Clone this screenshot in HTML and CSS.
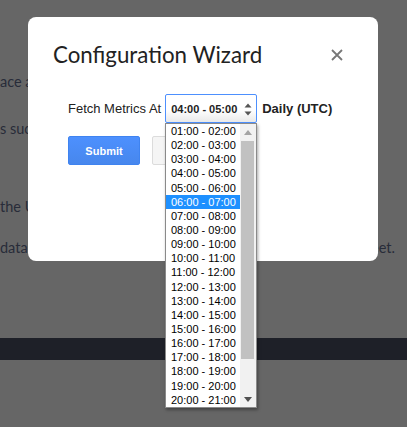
FILE: index.html
```html
<!DOCTYPE html>
<html>
<head>
<meta charset="utf-8">
<link rel="stylesheet" href="styles.css">
</head>
<body>
<div class="page">
  <p class="line l1">ace an</p>
  <p class="line l2">s succ</p>
  <p class="line l3">the Up</p>
  <p class="line l4 split"><span>data</span><span>sheet.</span></p>
  <div class="bar"></div>
</div>

<div class="dialog">
  <div class="head">
    <h1 class="title">Configuration Wizard</h1>
    <button class="close" aria-label="Close">
      <svg width="12" height="12" viewBox="0 0 12 12"><path d="M1 1L11 11M11 1L1 11" stroke="#777" stroke-width="1.8" fill="none"/></svg>
    </button>
  </div>
  <div class="row">
    <span class="label">Fetch Metrics At</span>
    <div class="select">
      <span>04:00 - 05:00</span>
      <svg width="8" height="13" viewBox="0 0 8 13"><path d="M4 0.5L7.5 4.5H0.5Z M4 12.5L7.5 8.5H0.5Z" fill="#555"/></svg>
    </div>
    <span class="suffix">Daily (UTC)</span>
  </div>
  <div class="buttons">
    <button class="btn primary">Submit</button>
    <button class="btn"></button>
  </div>

  <div class="listbox">
    <div class="options">
      <div class="opt">01:00 - 02:00</div>
      <div class="opt">02:00 - 03:00</div>
      <div class="opt">03:00 - 04:00</div>
      <div class="opt">04:00 - 05:00</div>
      <div class="opt">05:00 - 06:00</div>
      <div class="opt sel">06:00 - 07:00</div>
      <div class="opt">07:00 - 08:00</div>
      <div class="opt">08:00 - 09:00</div>
      <div class="opt">09:00 - 10:00</div>
      <div class="opt">10:00 - 11:00</div>
      <div class="opt">11:00 - 12:00</div>
      <div class="opt">12:00 - 13:00</div>
      <div class="opt">13:00 - 14:00</div>
      <div class="opt">14:00 - 15:00</div>
      <div class="opt">15:00 - 16:00</div>
      <div class="opt">16:00 - 17:00</div>
      <div class="opt">17:00 - 18:00</div>
      <div class="opt">18:00 - 19:00</div>
      <div class="opt">19:00 - 20:00</div>
      <div class="opt">20:00 - 21:00</div>
    </div>
    <div class="scrollbar">
      <div class="sb-btn"><svg width="8" height="5" viewBox="0 0 8 5"><path d="M4 0L8 5H0Z" fill="#a3a3a3"/></svg></div>
      <div class="track"><div class="thumb"></div></div>
      <div class="sb-btn"><svg width="8" height="5" viewBox="0 0 8 5"><path d="M4 5L8 0H0Z" fill="#505050"/></svg></div>
    </div>
  </div>
</div>
</body>
</html>
```
FILE: styles.css
```css
html, body {
  margin: 0;
  padding: 0;
}
body {
  width: 407px;
  height: 427px;
  overflow: hidden;
  position: relative;
  background: #666666;
  font-family: Lato, "Open Sans", sans-serif;
}
.page {
  padding-top: 72px;
  color: #282c39;
}
.line {
  margin: 0;
  font-size: 14.5px;
  line-height: 20px;
  white-space: nowrap;
  padding-left: 0;
}
.l2 { margin-top: 27px; }
.l3 { margin-top: 58px; }
.l4 { margin-top: 21px; }
.split {
  display: flex;
  justify-content: space-between;
  padding-right: 12px;
}
.bar {
  margin-top: 80px;
  height: 22px;
  background: #1e2028;
}

.dialog {
  position: absolute;
  left: 28px;
  top: 17px;
  width: 350px;
  height: 244px;
  background: #fff;
  border-radius: 8px;
}
.head {
  display: flex;
  justify-content: space-between;
  align-items: center;
  padding: 24px 35px 0 25px;
}
.title {
  margin: 0;
  font-size: 22.3px;
  line-height: 28px;
  font-weight: 400;
  color: #222;
}
.close {
  border: 0;
  background: none;
  padding: 0;
  width: 12px;
  height: 12px;
  display: flex;
}
.row {
  display: flex;
  align-items: center;
  margin-top: 25px;
  padding-left: 40px;
  font-family: "Liberation Sans", Arial, sans-serif;
  font-size: 13px;
  color: #222;
}
.label { margin-right: 4px; }
.select {
  box-sizing: border-box;
  width: 92px;
  height: 29px;
  border: 1px solid #4d90fe;
  border-radius: 2px;
  background: linear-gradient(#fff 55%, #e9e9e9);
  display: flex;
  align-items: center;
  justify-content: space-between;
  padding: 1px 4px 0 5px;
  font-weight: bold;
  font-size: 11px;
  color: #222;
}
.suffix {
  margin-left: 5px;
  font-weight: bold;
}
.buttons {
  display: flex;
  gap: 12px;
  margin-top: 13px;
  padding-left: 40px;
}
.btn {
  box-sizing: border-box;
  width: 72px;
  height: 29px;
  border: 1px solid #dcdcdc;
  border-radius: 2px;
  background: #f5f5f5;
  font-family: "Liberation Sans", Arial, sans-serif;
  font-size: 11px;
  font-weight: bold;
  color: #444;
  padding: 0;
}
.btn.primary {
  background: linear-gradient(#4d90fe, #4787ed);
  border-color: #3f83f0;
  color: #fff;
}

.listbox {
  position: absolute;
  left: 137px;
  top: 106px;
  width: 92px;
  height: 285px;
  box-sizing: border-box;
  border: 1px solid #8a8a8a;
  background: #fff;
  box-shadow: 1px 2px 3px rgba(0,0,0,0.35);
  display: flex;
  font-family: "Liberation Sans", Arial, sans-serif;
  font-size: 11px;
  color: #000;
}
.options {
  flex: 1;
  overflow: hidden;
}
.opt {
  height: 14.15px;
  line-height: 14.15px;
  padding-left: 5px;
  white-space: nowrap;
}
.opt.sel {
  background: #1e90ff;
  color: #fff;
}
.scrollbar {
  width: 16px;
  background: #f1f1f1;
  display: flex;
  flex-direction: column;
}
.sb-btn {
  height: 16px;
  display: flex;
  align-items: center;
  justify-content: center;
}
.track {
  flex: 1;
  padding: 1px 2px 0 1px;
}
.thumb {
  height: 218px;
  background: #c1c1c1;
}
```
